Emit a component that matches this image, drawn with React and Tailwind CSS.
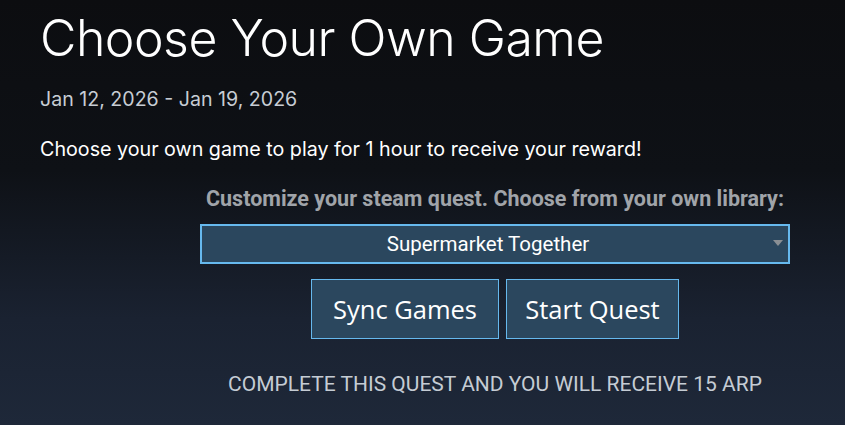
import React, { useState } from "react";

const games = ["Supermarket Together", "Counter-Strike 2", "Dota 2", "Stardew Valley"];

const App = () => {
    const [game, setGame] = useState(games[0]);

    return (
        <div className="w-[845px] h-[425px] overflow-hidden bg-[linear-gradient(180deg,#0c0d10_0%,#0e1116_40%,#1a2231_75%,#1e2839_100%)] font-['Inter',sans-serif]">
            {/* Header */}
            <div className="pl-10 pt-[8px]">
                <h1 className="text-[50px] leading-[60px] font-light tracking-[-0.5px] text-white">Choose Your Own Game</h1>
                <p className="mt-[19px] text-[19.6px] leading-[24px] text-[#c7cdd4]">Jan 12, 2026 - Jan 19, 2026</p>
                <p className="mt-[26px] text-[19.7px] leading-[24px] text-white">
                    Choose your own game to play for 1 hour to receive your reward!
                </p>
            </div>

            {/* Quest settings */}
            <div className="ml-[200px] w-[590px] mt-[25px] flex flex-col items-center font-['Roboto',sans-serif]">
                <p className="text-[21.5px] leading-[26px] font-bold text-[#a0a4a9]">
                    Customize your steam quest. Choose from your own library:
                </p>
                <div className="relative mt-[12px] w-full">
                    <select
                        value={game}
                        onChange={(e) => setGame(e.target.value)}
                        className="w-full h-[40px] pr-[14px] appearance-none bg-[#2b475e] border-2 border-[#66b9ee] text-white text-[20.5px] text-center outline-none"
                    >
                        {games.map((g) => (
                            <option key={g} value={g}>{g}</option>
                        ))}
                    </select>
                    <span className="pointer-events-none absolute right-[7px] top-[16px] w-0 h-0 border-l-[5px] border-r-[5px] border-t-[6px] border-l-transparent border-r-transparent border-t-[#8a8f94]"></span>
                </div>
                <div className="mt-[15px] flex gap-[7px] font-['Open_Sans',sans-serif]">
                    <button className="w-[188px] h-[60px] bg-[#2b475e] border border-[#66b9ee] text-white text-[25.5px]">
                        Sync Games
                    </button>
                    <button className="w-[173px] h-[60px] bg-[#2b475e] border border-[#66b9ee] text-white text-[25.5px]">
                        Start Quest
                    </button>
                </div>
                <p className="mt-[33px] text-[21px] leading-[24px] text-[#c5ccd4] uppercase">
                    Complete this quest and you will receive 15 ARP
                </p>
            </div>
        </div>
    );
};

export default App;
